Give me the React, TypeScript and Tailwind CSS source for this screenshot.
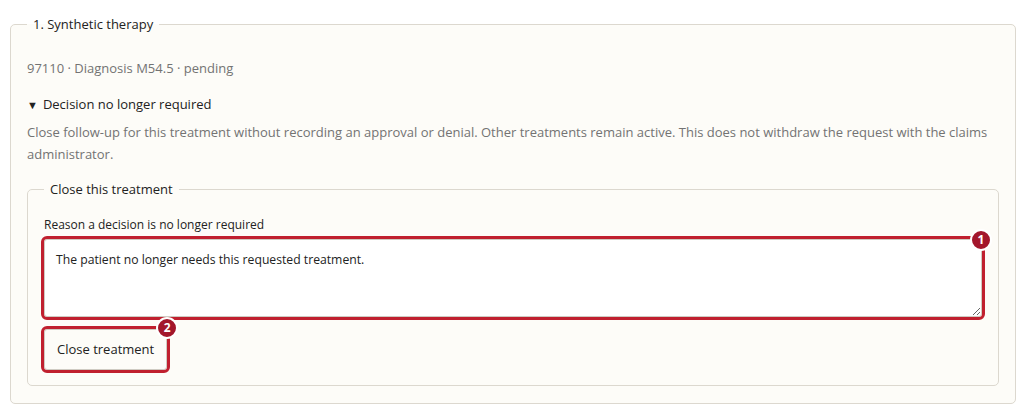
export default function App() {
  return (
    <div className="min-h-[417px] bg-white px-[10px] pt-[16px] font-['Open_Sans',Arial,sans-serif] text-[13px] text-[#222]">
      <fieldset className="rounded-[5px] border border-[#dcd8cf] bg-[#fdfcf8] px-4 pb-[17px]">
        <legend className="px-1.5 text-[13px] leading-[17px] text-[#222]">1. Synthetic therapy</legend>

        <p className="mt-[24px] leading-[22px] text-[#737373]">97110 · Diagnosis M54.5 · pending</p>

        <details open className="mt-[14px]">
          <summary className="cursor-pointer list-none leading-[22px] text-[#222]">
            <span className="mr-[5px] inline-block text-[11px]">▼</span>Decision no longer required
          </summary>
          <p className="mt-[5px] leading-[22px] text-[#737373]">
            Close follow-up for this treatment without recording an approval or denial. Other treatments remain active. This does not withdraw the request with the claims administrator.
          </p>

          <fieldset className="mt-[16px] rounded-[5px] border border-[#dcd8cf] px-4 pb-[15px]">
            <legend className="px-1.5 leading-[17px] text-[#222]">Close this treatment</legend>

            <label className="mt-[19px] block text-[12px] leading-[16px] text-[#222]">
              Reason a decision is no longer required
            </label>

            <div className="relative mt-[6px]">
              <textarea
                defaultValue="The patient no longer needs this requested treatment."
                className="block h-[78px] w-full resize-y rounded-[3px] border border-[#cfcbc2] bg-white px-[11px] py-[11px] text-[12.2px] leading-[18px] text-[#222] outline-3 outline-[#c0202f] outline-solid"
              />
              <Badge n={1} className="right-[-10px] top-[-10px]" />
            </div>

            <div className="mt-[12px] flex">
              <div className="relative">
                <button className="block h-[41px] rounded-[3px] border border-[#cfcbc2] bg-[#fdfcf8] px-[12px] text-[13px] text-[#222] outline-3 outline-[#c0202f] outline-solid">
                  Close treatment
                </button>
                <Badge n={2} className="right-[-11px] top-[-12px]" />
              </div>
            </div>
          </fieldset>
        </details>
      </fieldset>
    </div>
  )
}

function Badge({ n, className }: { n: number; className: string }) {
  return (
    <span
      className={`absolute flex h-[22px] w-[22px] items-center justify-center rounded-full border-2 border-white bg-[#a3162b] text-[12px] font-bold leading-none text-white ${className}`}
    >
      {n}
    </span>
  )
}
